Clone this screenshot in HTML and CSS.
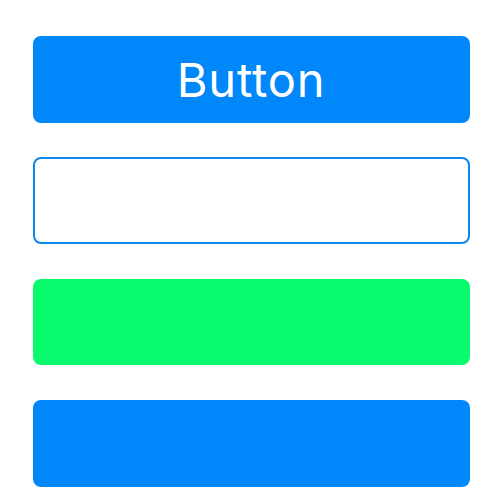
FILE: index.html
```html
<!DOCTYPE html>
<html>
<head>
<meta charset="utf-8">
<link rel="stylesheet" href="styles.css">
</head>
<body>
<div class="stack">
  <div class="btn btn-blue"><span class="label">Button</span></div>
  <div class="btn btn-outline"></div>
  <div class="btn btn-green"></div>
  <div class="btn btn-blue"></div>
</div>
</body>
</html>
```
FILE: styles.css
```css
html, body {
  margin: 0;
  padding: 0;
  background: #ffffff;
}
.stack {
  display: flex;
  flex-direction: column;
  gap: 34.6px;
  padding: 36px 30.5px 0 32.5px;
}
.btn {
  height: 86.7px;
  border-radius: 8px;
  box-sizing: border-box;
  display: flex;
  align-items: center;
  justify-content: center;
}
.btn-blue {
  background: #0088fb;
}
.btn-green {
  background: #0afa6e;
}
.btn-outline {
  background: #ffffff;
  border: 2px solid #0a88f0;
}
.label {
  color: #ffffff;
  font-family: Inter, "Open Sans", sans-serif;
  font-size: 47px;
  font-weight: 400;
  letter-spacing: 0.8px;
  padding-top: 1px;
}
```
